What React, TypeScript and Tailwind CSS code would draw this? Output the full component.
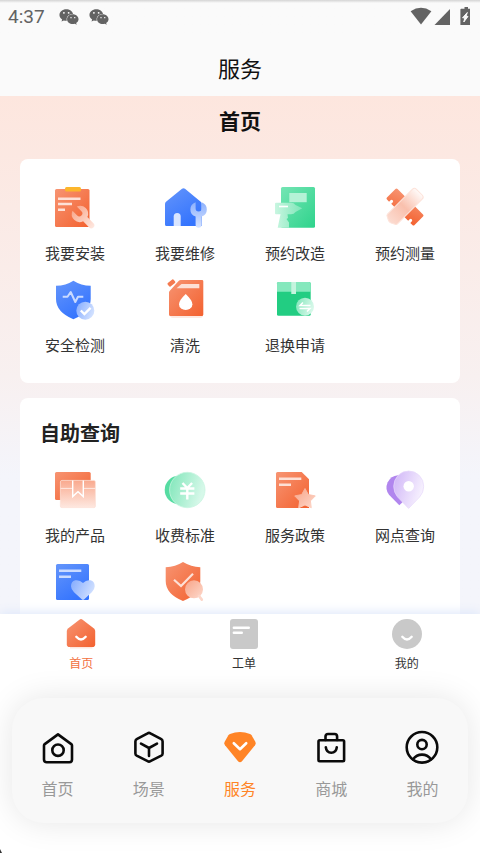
import type { ReactNode } from "react";
import { FaWeixin } from "react-icons/fa";

type Item = { label?: string; icon: ReactNode };

const WRENCH =
  "M-3 -7.6A8 8 0 0 0 -3 7.4V16a3 3 0 0 0 6 0V7.4A8 8 0 0 0 3 -7.6V-1a3 3 0 0 1 -6 0Z";

/* Gradients shared by all the service icons. */
function Gradients() {
  return (
    <svg className="absolute size-0" aria-hidden="true">
      <defs>
        <linearGradient id="orange" x1="0" y1="0" x2="1" y2="1">
          <stop offset="0" stopColor="#f79472" />
          <stop offset="1" stopColor="#f3612f" />
        </linearGradient>
        <linearGradient id="blue" x1="0" y1="0" x2="0.6" y2="1">
          <stop offset="0" stopColor="#6495fb" />
          <stop offset="1" stopColor="#3474fe" />
        </linearGradient>
        <linearGradient id="green" x1="0" y1="0" x2="1" y2="1">
          <stop offset="0" stopColor="#74e5b4" />
          <stop offset="1" stopColor="#2fd38c" />
        </linearGradient>
        <linearGradient id="peach" x1="0" y1="0" x2="1" y2="1">
          <stop offset="0" stopColor="#f8a488" />
          <stop offset="1" stopColor="#fdd9cc" />
        </linearGradient>
        <linearGradient id="peachDown" x1="0" y1="0" x2="0" y2="1">
          <stop offset="0" stopColor="#f9a98e" />
          <stop offset="1" stopColor="#fee8e0" />
        </linearGradient>
        <linearGradient id="peachUp" x1="0" y1="0" x2="1" y2="0">
          <stop offset="0" stopColor="#fcdcd1" />
          <stop offset="0.5" stopColor="#f9c0ad" />
          <stop offset="1" stopColor="#fffaf8" />
        </linearGradient>
        <linearGradient id="sky" x1="0" y1="0" x2="0" y2="1">
          <stop offset="0" stopColor="#8db1fd" />
          <stop offset="1" stopColor="#d6e3ff" />
        </linearGradient>
        <linearGradient id="skyRight" x1="0" y1="0" x2="1" y2="0.4">
          <stop offset="0" stopColor="#84abfe" />
          <stop offset="1" stopColor="#cfdfff" />
        </linearGradient>
        <linearGradient id="mint" x1="0" y1="0" x2="1" y2="0.3">
          <stop offset="0" stopColor="#7fe6b9" />
          <stop offset="1" stopColor="#d6f8e9" />
        </linearGradient>
        <linearGradient id="drill" x1="0" y1="0" x2="1" y2="0">
          <stop offset="0" stopColor="#c9f6e1" />
          <stop offset="1" stopColor="#7de6b8" />
        </linearGradient>
        <linearGradient id="lilac" x1="0" y1="0" x2="1" y2="0.4">
          <stop offset="0" stopColor="#cfb4f7" />
          <stop offset="1" stopColor="#f6f0fe" />
        </linearGradient>
      </defs>
    </svg>
  );
}

function Art({ children }: { children: ReactNode }) {
  return (
    <svg viewBox="0 0 48 48" className="size-12" fill="none" aria-hidden="true">
      {children}
    </svg>
  );
}

const services: Item[] = [
  {
    label: "我要安装",
    icon: (
      <Art>
        <rect x="4" y="5" width="34.5" height="38" rx="1.5" fill="url(#orange)" />
        <rect x="14" y="3" width="16" height="4.6" rx="1.5" fill="#fcb62c" />
        <path d="M7 14.8H29.5M7 20H21M7 25.8H14" stroke="#fde0d6" strokeWidth="2.4" />
        <path d={WRENCH} transform="translate(29 30) rotate(-45)" fill="url(#peachDown)" />
      </Art>
    ),
  },
  {
    label: "我要维修",
    icon: (
      <Art>
        <path d="M4 20Q4 18.6 5 17.8L21 4.8Q22.5 3.6 24 4.8L39.7 17.8Q40.7 18.6 40.7 20V42H5.5Q4 42 4 40.5Z" fill="url(#blue)" />
        <path d="M12.7 42V32.5a3.5 3.5 0 0 1 7 0V42Z" fill="#d9e5ff" />
        <path d={WRENCH} transform="translate(37.6 25.5) scale(1 .96)" fill="url(#sky)" />
      </Art>
    ),
  },
  {
    label: "预约改造",
    icon: (
      <Art>
        <rect x="10" y="3" width="34" height="40.7" rx="1.5" fill="url(#green)" />
        <rect x="18.3" y="9" width="17.4" height="9.2" fill="#b4f2d6" />
        <path d="M5 18.7H20Q23 18.7 24.5 21L31.3 24.3L24.5 28Q23 30.3 20 30.3H16.5L17 34L15.5 35L18 38.5V43.7H6.7L9.5 30.3H5Q4 30.3 4 29.3V19.7Q4 18.7 5 18.7Z" fill="url(#drill)" />
        <path d="M8 22.5H17" stroke="#fff" strokeWidth="1.6" />
      </Art>
    ),
  },
  {
    label: "预约测量",
    icon: (
      <Art>
        <g transform="translate(24 23) rotate(45)">
          <path d="M-18 -7.5H18Q19.5 -7.5 19.5 -6V6Q19.5 7.5 18 7.5H15V5.5a1.5 1.5 0 0 0 -3 0V7.5H-12V5.5a1.5 1.5 0 0 0 -3 0V7.5H-18Q-19.5 7.5 -19.5 6V-6Q-19.5 -7.5 -18 -7.5Z" fill="url(#orange)" />
        </g>
        <g transform="translate(23.5 23) rotate(-45)">
          <path d="M-17 -7H18Q21 -7 21 -4V4Q21 7 18 7H-17Q-18.5 7 -19 5.5L-21 1.5Q-21.5 0 -21 -1.5L-19 -5.5Q-18.5 -7 -17 -7Z" fill="url(#peachUp)" stroke="#fde3da" />
        </g>
      </Art>
    ),
  },
  {
    label: "安全检测",
    icon: (
      <Art>
        <path d="M22.4 4.7Q30 9.5 39.7 9.8V23Q39.7 36 22.4 43.3Q5 36 5 23V9.8Q15 9.5 22.4 4.7Z" fill="url(#blue)" />
        <path d="M11.7 20.7H16.5L19.7 16L24.3 26L27 20.7H32.3" stroke="#c9daff" strokeWidth="2" strokeLinejoin="round" />
        <circle cx="34.3" cy="34.7" r="9" fill="url(#skyRight)" />
        <path d="M29.8 34.5L33.4 38L39.6 31.8" stroke="#fff" strokeWidth="2.4" />
      </Art>
    ),
  },
  {
    label: "清洗",
    icon: (
      <Art>
        <rect x="9" y="36" width="33" height="6" rx="3" fill="#fde9e2" />
        <path d="M8 16.5Q8 15.7 8.6 15L17.6 5Q18.5 4 20 4H41Q42.3 4 42.3 5.3V38.5Q42.3 40 40.8 40H9.5Q8 40 8 38.5Z" fill="url(#orange)" />
        <rect x="-3.8" y="-2.2" width="7.6" height="4.4" rx="1" transform="translate(10.4 7) rotate(-38)" fill="#f47a50" />
        <path d="M20.5 8H38.3V12.3H15.5Z" fill="#fde0d6" />
        <path d="M24.7 18Q31.4 24.4 31.4 28.2a6.7 5.9 0 0 1 -13.4 0Q18 24.4 24.7 18Z" fill="#fff" />
      </Art>
    ),
  },
  {
    label: "退换申请",
    icon: (
      <Art>
        <rect x="6" y="6" width="33.7" height="33.7" rx="1.5" fill="#22cd82" />
        <path d="M7.5 6H38.2Q39.7 6 39.7 7.5V15.7H6V7.5Q6 6 7.5 6Z" fill="#85e8bd" />
        <path d="M20.3 6H25V18H20.3Z" fill="#c4f4de" />
        <circle cx="34" cy="30.7" r="9" fill="url(#mint)" />
        <path d="M39.5 29.5H29L32 26.5M28.5 32.5H39L36 35.5" stroke="#fff" strokeWidth="1.5" />
      </Art>
    ),
  },
];

const queries: Item[] = [
  {
    label: "我的产品",
    icon: (
      <Art>
        <rect x="4" y="6" width="35.7" height="28" rx="1.5" fill="url(#orange)" />
        <rect x="9.4" y="14.4" width="35" height="27.2" rx="1.5" fill="url(#peachDown)" stroke="#fde0d6" strokeWidth=".8" />
        <path d="M9.5 22.4H21.7M32.3 22.4H44.4" stroke="#fee9e2" strokeWidth="1" />
        <path d="M21.7 14.5V30.6L27 25.8L32.3 30.6V14.5" stroke="#fff" strokeWidth="1.4" />
      </Art>
    ),
  },
  {
    label: "收费标准",
    icon: (
      <Art>
        <circle cx="17.9" cy="24" r="14.2" fill="#56dca2" />
        <circle cx="26.3" cy="24" r="17.7" fill="url(#mint)" stroke="#c9f5e1" strokeWidth=".8" />
        <path d="M21.5 17L26.3 22L31.1 17M19.2 22.5H33.4M19.2 27.5H33.4M26.3 22V33.5" stroke="#fff" strokeWidth="2.4" />
      </Art>
    ),
  },
  {
    label: "服务政策",
    icon: (
      <Art>
        <path d="M6.5 6H30.7L38 13.3V42H6.5Q5 42 5 40.5V7.5Q5 6 6.5 6Z" fill="url(#orange)" />
        <path d="M8 12.7H30.3M8 18.7H20" stroke="#fde0d6" strokeWidth="2.4" />
        <path d="M34 22.5L37.3 28.6L44.3 29.9L39.4 34.9L40.3 41.8L34 38.9L27.7 41.8L28.6 34.9L23.7 29.9L30.7 28.6Z" fill="url(#peach)" stroke="url(#peach)" strokeWidth="1" strokeLinejoin="round" />
      </Art>
    ),
  },
  {
    label: "网点查询",
    icon: (
      <Art>
        <path d="M18.3 39.2L8 28.8A12.3 12.3 0 0 1 17 9.2Q24 9 26 14V32Z" fill="#b186ee" />
        <path d="M27.6 42.4L16.6 31Q12.7 26.5 12.7 20.3A15 15.3 0 0 1 42.7 20.3Q42.7 26.5 38.6 31Z" fill="url(#lilac)" stroke="#e7d9fb" strokeWidth=".7" />
        <circle cx="27.7" cy="20.2" r="5.2" fill="#fff" />
      </Art>
    ),
  },
  {
    icon: (
      <Art>
        <rect x="5" y="6" width="33" height="36" rx="1.5" fill="url(#blue)" />
        <path d="M8 12.7H30.3M8 18.7H20" stroke="#cbdbff" strokeWidth="2.4" />
        <path d="M32 25Q28.5 21.5 24.2 22.3Q20 23.5 20 28.3Q20 31.5 23 34.3L31 41.5Q32 42.3 33 41.5L40.8 34.3Q43.7 31.5 43.7 28.3Q43.7 23.5 39.5 22.3Q35.3 21.5 32 25Z" fill="url(#skyRight)" />
      </Art>
    ),
  },
  {
    icon: (
      <Art>
        <path d="M22 4Q30 8.8 39.3 9.2V23Q39.3 36 22 43Q4.7 36 4.7 23V9.2Q14.5 8.8 22 4Z" fill="url(#orange)" />
        <path d="M13 21.8L20 28L32 15.8" stroke="#fde0d6" strokeWidth="2.2" />
        <circle cx="33" cy="31.3" r="9" fill="url(#peach)" />
        <path d="M38 38L40.8 41.6" stroke="#fcd6c9" strokeWidth="2.6" strokeLinecap="round" />
      </Art>
    ),
  },
];

const Smile = () => (
  <path d="M10.3 17.8Q15 23.2 19.7 17.8" stroke="#fff" strokeWidth="2.4" strokeLinecap="round" />
);

const tabs: Item[] = [
  {
    label: "首页",
    icon: (
      <>
        <path d="M4 28H26.5V29.5H4Z" fill="#fde6de" />
        <path d="M.8 12Q.8 10.4 2 9.4L13.4 .7Q15 -.5 16.6 .7L28 9.4Q29.2 10.4 29.2 12V25.2Q29.2 28 26.4 28H3.6Q.8 28 .8 25.2Z" fill="url(#orange)" />
        <Smile />
      </>
    ),
  },
  {
    label: "工单",
    icon: (
      <>
        <rect x="1" width="28" height="30" rx="3" fill="#c9c9c9" />
        <path d="M4.8 8.8H19.8M4.8 13.8H12.8" stroke="#fff" strokeWidth="2.4" strokeLinecap="round" />
      </>
    ),
  },
  {
    label: "我的",
    icon: (
      <>
        <circle cx="15" cy="15" r="15" fill="#c9c9c9" />
        <Smile />
      </>
    ),
  },
];

const navItems: Item[] = [
  {
    label: "首页",
    icon: (
      <>
        <path d="M18 4.4L31.6 14.4Q32 14.8 32 15.5V29.5Q32 32.3 29.2 32.3H6.8Q4 32.3 4 29.5V15.5Q4 14.8 4.4 14.4Z" />
        <circle cx="18" cy="20.2" r="5.7" />
      </>
    ),
  },
  {
    label: "场景",
    icon: (
      <>
        <path d="M16.6 3.3Q18 2.5 19.4 3.3L30.3 9.2Q31.6 10 31.6 11.5V23.5Q31.6 25 30.3 25.7L19.4 31.2Q18 32 16.6 31.2L5.7 25.7Q4.4 25 4.4 23.5V11.5Q4.4 10 5.7 9.2Z" />
        <path d="M10 13.6L18 18L26 13.6M18 18V26" />
      </>
    ),
  },
  {
    label: "服务",
    icon: (
      <>
        <path d="M8 3.9Q18 0 28 3.9Q29 4.3 29.6 5.2L33.3 11.7Q34.2 13.6 33 15.3L20 31.2Q18 33.2 16 31.2L3 15.3Q1.8 13.6 2.7 11.7L6.4 5.2Q7 4.3 8 3.9Z" fill="#ff8426" stroke="none" />
        <path d="M11.8 13.2L18 19.2L24.2 13.2" stroke="#fff" />
      </>
    ),
  },
  {
    label: "商城",
    icon: (
      <>
        <rect x="5.5" y="10.3" width="25.6" height="21" rx="1.2" />
        <path d="M12.5 10V6.5Q12.5 4 15 4H21.6Q24.1 4 24.1 6.5V10M12.8 17.2Q13.4 22.8 18.3 22.8Q23.2 22.8 23.8 17.2" />
      </>
    ),
  },
  {
    label: "我的",
    icon: (
      <>
        <circle cx="18" cy="17.3" r="15.3" />
        <circle cx="18" cy="14.6" r="4.7" />
        <path d="M9 29.2Q12.5 24.6 18 24.6Q23.5 24.6 27 29.2" />
      </>
    ),
  },
];

function ServiceGrid({ items }: { items: Item[] }) {
  return (
    <div className="grid grid-cols-4 gap-y-[11px]">
      {items.map((item, i) => (
        <button key={i} type="button" className="flex flex-col items-center gap-[9px]">
          {item.icon}
          {item.label && <span className="text-[15px] leading-6 text-[#333]">{item.label}</span>}
        </button>
      ))}
    </div>
  );
}

function StatusBar() {
  return (
    <div className="flex h-[33px] items-center bg-linear-to-b from-[#d4d4d4] to-[#fafafa] to-[3px] px-2 text-[#636363]">
      <span className="font-[Roboto,sans-serif] text-[19px] leading-6">4:37</span>
      <div className="ml-3.5 flex gap-2.5">
        <FaWeixin className="size-5" />
        <FaWeixin className="size-5" />
      </div>
      <svg viewBox="0 0 62 20" className="ml-auto h-5 w-[62px]" fill="currentColor" aria-hidden="true">
        <path d="M.6 4.2Q11 -2.6 21.4 4.2L11 17.6Z" />
        <path d="M40 2V18H24.5Z" />
        <path d="M52.5 1.7H54.5V0H58V1.7H60V18H50.4V2.5Q50.4 1.7 51.2 1.7Z" />
        <path d="M57.3 5.5L52.6 10.8H54.8L53.8 15L58 9.4H56Z" fill="#fafafa" stroke="#fafafa" />
      </svg>
    </div>
  );
}

export default function App() {
  return (
    <div className="relative flex h-screen flex-col overflow-hidden bg-white font-['Noto_Sans_CJK_SC',sans-serif]">
      <Gradients />
      <header className="bg-[#fafafa]">
        <StatusBar />
        <h1 className="pt-[18px] pb-[13px] text-center text-[22px] leading-8 text-[#111]">服务</h1>
      </header>

      <main className="min-h-0 flex-1 overflow-hidden bg-linear-to-b from-[#fde6de] via-[#f8f0f0] via-[280px] to-[#f4f5fb] to-[380px] px-5">
        <h2 className="pt-[9px] pb-6 text-center text-[21px] leading-[30px] font-bold text-[#111]">首页</h2>
        <section className="rounded-lg bg-white pt-[25px] pb-[26px]">
          <ServiceGrid items={services} />
        </section>
        <section className="mt-[15px] rounded-lg bg-white pt-5 pb-6">
          <h3 className="mb-[18px] px-5 text-[20px] leading-[30px] font-bold text-[#222]">自助查询</h3>
          <ServiceGrid items={queries} />
        </section>
      </main>

      <footer className="bg-white pb-[30px] shadow-[0_-2px_10px_#dfe8fa]">
        <nav aria-label="服务" className="-mr-2 grid grid-cols-3 pt-[5px] pb-[25px]">
          {tabs.map((tab, i) => (
            <button key={tab.label} type="button" className="flex flex-col items-center gap-1">
              <svg viewBox="0 0 30 30" className="size-[30px] overflow-visible" fill="none" aria-hidden="true">
                {tab.icon}
              </svg>
              <span className={`text-xs leading-5 ${i === 0 ? "text-[#f3713f]" : "text-[#333]"}`}>{tab.label}</span>
            </button>
          ))}
        </nav>

        <nav
          aria-label="主导航"
          className="mx-3 grid grid-cols-5 rounded-[32px] bg-[#f8f8f8] pt-8 pb-[23px] shadow-[0_0_32px_rgba(0,0,0,0.1)]"
        >
          {navItems.map((item, i) => (
            <button key={item.label} type="button" className="flex flex-col items-center gap-2.5">
              <svg
                viewBox="0 0 36 36"
                className="size-9"
                fill="none"
                stroke="#0a0a0a"
                strokeWidth="2.6"
                strokeLinecap="round"
                strokeLinejoin="round"
                aria-hidden="true"
              >
                {item.icon}
              </svg>
              <span className={`text-base leading-6 ${i === 2 ? "text-[#ff8426]" : "text-[#999]"}`}>{item.label}</span>
            </button>
          ))}
        </nav>
      </footer>
      <svg viewBox="0 0 3 4" className="absolute bottom-0 left-0 h-1 w-[3px]" aria-hidden="true">
        <path d="M0 0L2 4H0Z" fill="#333" />
      </svg>
    </div>
  );
}
